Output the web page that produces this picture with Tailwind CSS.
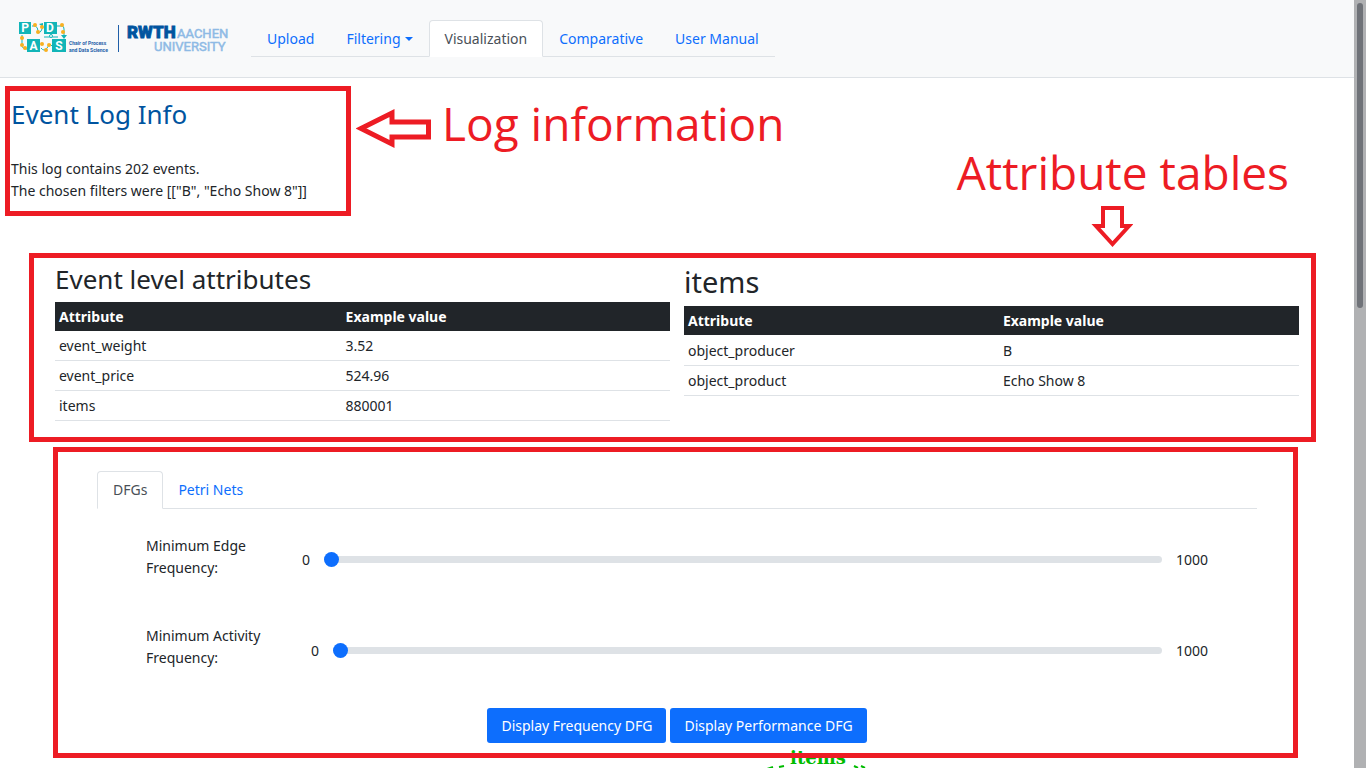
<!DOCTYPE html>
<html lang="en">
<head>
<meta charset="utf-8">
<meta name="viewport" content="width=device-width, initial-scale=1">
<title>Event Log Visualization</title>
<script src="https://cdn.jsdelivr.net/npm/@tailwindcss/browser@4"></script>
</head>
<body class="flex h-screen overflow-hidden bg-white font-['Noto_Sans',sans-serif] text-sm leading-[22px] text-[#212529]">
<div class="min-w-0 flex-1 overflow-hidden">
  <header class="flex items-start border-b border-[#dee2e6] bg-[#f8f9fa] pt-5 pb-5 pl-[19px]">
    <a href="#" aria-label="Chair of Process and Data Science, RWTH Aachen University" class="mr-[22px] block">
      <svg class="block" width="210" height="36" viewBox="0 0 210 36">
        <g fill="none" stroke="#12b5b8" stroke-width="1">
          <path d="M13 6h3q3 1 3 5t3 0l2-4M38 6h5q2 0 2 3v8M3 15v10q0 4 5 4M22 28q3 4 6 0t3-4 3 3M25 17h14"/>
        </g>
        <g fill="#12b5b8">
          <rect x="0" y="2" width="12" height="12"/><rect x="25" y="2" width="13" height="12"/>
          <rect x="8" y="19" width="13" height="13"/><rect x="33" y="19" width="14" height="13"/>
          <path d="M42 15h6l-3 4zM20 4l4-1v4z"/>
        </g>
        <circle cx="32" cy="16" r="1.5" fill="#fff" stroke="#12b5b8"/>
        <g fill="#f9b020">
          <circle cx="16" cy="5" r="2"/><circle cx="19" cy="12" r="2"/><circle cx="23" cy="7" r="2"/>
          <circle cx="43" cy="5" r="2"/><circle cx="44" cy="12" r="2"/><circle cx="3" cy="18" r="2"/>
          <circle cx="3" cy="25" r="2"/><circle cx="6" cy="28" r="2"/><circle cx="23" cy="24" r="2"/>
          <circle cx="27" cy="30" r="2"/><circle cx="30" cy="25" r="2"/>
        </g>
        <g fill="#fff" font-family="Roboto, sans-serif" font-weight="700" font-size="12" text-anchor="middle">
          <text x="6" y="12">P</text><text x="31" y="12">D</text><text x="14.5" y="30">A</text><text x="40" y="30">S</text>
        </g>
        <g fill="#1f5fa8" font-family="Roboto, sans-serif" font-weight="700" font-size="5">
          <text x="50" y="25">Chair of Process</text><text x="50" y="32">and Data Science</text>
        </g>
        <rect x="99" y="5" width="1" height="27" fill="#1f5fa8"/>
        <g font-family="Roboto, sans-serif">
          <text x="108" y="18" font-size="17" font-weight="900" fill="#00549f" stroke="#00549f" stroke-width=".8">RWTH</text>
          <text x="158" y="18" font-size="13" fill="#8ebae5" stroke="#8ebae5" stroke-width=".5">AACHEN</text>
          <text x="135" y="31" font-size="13" fill="#8ebae5" stroke="#8ebae5" stroke-width=".5">UNIVERSITY</text>
        </g>
      </svg>
    </a>
    <nav class="flex border-b border-[#dee2e6] text-[#0d6efd]">
      <a href="#" class="-mb-px border border-transparent px-[15px] pt-[7px] pb-[6px]">Upload</a>
      <a href="#" class="-mb-px flex items-center gap-1 border border-transparent px-[15px] pt-[7px] pb-[6px]">Filtering<span class="border-x-4 border-t-4 border-x-transparent border-t-[#0d6efd]"></span></a>
      <a href="#" aria-current="page" class="-mb-px rounded-t border border-[#dee2e6] border-b-white bg-white px-[15px] pt-[7px] pb-[6px] text-[#495057]">Visualization</a>
      <a href="#" class="-mb-px border border-transparent px-[15px] pt-[7px] pb-[6px]">Comparative</a>
      <a href="#" class="-mb-px border border-transparent px-[15px] pt-[7px] pb-[6px]">User Manual</a>
    </nav>
  </header>

  <main>
    <section class="flex items-start pt-2 pl-[5px]">
      <div class="w-[346px] border-5 border-[#ed1c24] px-px pt-[7px] pb-[9px]">
        <h1 class="text-[26px] leading-[32px] text-[#00549f]">Event Log Info</h1>
        <p class="mt-7">This log contains 202 events.</p>
        <p>The chosen filters were [["B", "Echo Show 8"]]</p>
      </div>
      <svg class="mt-[22px] ml-[5px] shrink-0" width="76" height="42" viewBox="0 0 76 42" fill="none" stroke="#ed1c24" stroke-width="5"><path d="M5 20.500L36 5v9h36.500v15H36v7z"/></svg>
      <p class="mt-[7px] ml-[10px] font-['Open_Sans',sans-serif] text-[46px] leading-[60px] whitespace-nowrap text-[#ed1c24]">Log information</p>
    </section>
    <div class="-mt-[72px] mr-[65px] flex flex-col items-end text-[#ed1c24]">
      <p class="font-['Open_Sans',sans-serif] text-[46px] leading-[56px]">Attribute tables</p>
      <svg class="mt-1 mr-[156px]" width="42" height="46" viewBox="0 0 42 46" fill="none" stroke="#ed1c24" stroke-width="4"><path d="M12 4h19v18h7L21.500 40 5 22h7z"/></svg>
    </div>

    <section class="mt-[3px] mr-[38px] ml-[29px] flex gap-3.5 border-5 border-[#ed1c24] pt-[6px] pr-3 pb-4 pl-[21px]">
      <div class="flex-1">
        <h2 class="mb-[7px] text-[26px] leading-[31px]">Event level attributes</h2>
        <table class="w-full table-fixed border-collapse text-left">
          <thead><tr class="h-[29px] bg-[#212529] text-white"><th class="w-[46.6%] px-1">Attribute</th><th class="px-1">Example value</th></tr></thead>
          <tbody>
            <tr class="h-[29px] border-b border-[#dee2e6]"><td class="px-1 pt-[2px]">event_weight</td><td class="px-1 pt-[2px]">3.52</td></tr>
            <tr class="h-[30px] border-b border-[#dee2e6]"><td class="px-1 pt-[2px]">event_price</td><td class="px-1 pt-[2px]">524.96</td></tr>
            <tr class="h-[30px] border-b border-[#dee2e6]"><td class="px-1 pt-[2px]">items</td><td class="px-1 pt-[2px]">880001</td></tr>
          </tbody>
        </table>
      </div>
      <div class="flex-1">
        <h2 class="mb-[7px] text-[29px] leading-[35px]">items</h2>
        <table class="w-full table-fixed border-collapse text-left">
          <thead><tr class="h-[29px] bg-[#212529] text-white"><th class="w-[51.2%] px-1">Attribute</th><th class="px-1">Example value</th></tr></thead>
          <tbody>
            <tr class="h-[30px] border-b border-[#dee2e6]"><td class="px-1 pt-[2px]">object_producer</td><td class="px-1 pt-[2px]">B</td></tr>
            <tr class="h-[30px] border-b border-[#dee2e6]"><td class="px-1 pt-[2px]">object_product</td><td class="px-1 pt-[2px]">Echo Show 8</td></tr>
          </tbody>
        </table>
      </div>
    </section>

    <section class="relative z-10 mt-[5px] mr-14 ml-[53px] border-5 border-[#ed1c24] px-9 pt-[19px] pb-[10px] pl-[39px]">
      <div role="tablist" class="flex border-b border-[#dee2e6] text-[#0d6efd]">
        <button role="tab" aria-selected="true" class="-mb-px rounded-t border border-[#dee2e6] border-b-white bg-white px-[15px] py-[7px] text-[#495057]">DFGs</button>
        <button role="tab" aria-selected="false" class="-mb-px border border-transparent px-3.5 py-[7px]">Petri Nets</button>
      </div>
      <div class="mt-[26px] mr-[49px] ml-[49px] flex items-start">
        <label for="edge" class="w-[156px] shrink-0 pr-8">Minimum Edge Frequency:</label>
        <div class="mt-3.5 flex flex-1 items-center">
          <span>0</span>
          <input id="edge" type="range" min="0" max="1000" value="0" class="mx-3.5 h-[22px] min-w-0 flex-1 appearance-none bg-transparent [&::-webkit-slider-runnable-track]:h-[7px] [&::-webkit-slider-runnable-track]:rounded-full [&::-webkit-slider-runnable-track]:bg-[#dee2e6] [&::-webkit-slider-thumb]:-mt-1 [&::-webkit-slider-thumb]:size-[15px] [&::-webkit-slider-thumb]:appearance-none [&::-webkit-slider-thumb]:rounded-full [&::-webkit-slider-thumb]:bg-[#0d6efd]">
          <span>1000</span>
        </div>
      </div>
      <div class="mt-[46px] mr-[49px] ml-[49px] flex items-start">
        <label for="activity" class="w-[165px] shrink-0 pr-8">Minimum Activity Frequency:</label>
        <div class="mt-[15px] flex flex-1 items-center">
          <span>0</span>
          <input id="activity" type="range" min="0" max="1000" value="0" class="mx-3.5 h-[22px] min-w-0 flex-1 appearance-none bg-transparent [&::-webkit-slider-runnable-track]:h-[7px] [&::-webkit-slider-runnable-track]:rounded-full [&::-webkit-slider-runnable-track]:bg-[#dee2e6] [&::-webkit-slider-thumb]:-mt-1 [&::-webkit-slider-thumb]:size-[15px] [&::-webkit-slider-thumb]:appearance-none [&::-webkit-slider-thumb]:rounded-full [&::-webkit-slider-thumb]:bg-[#0d6efd]">
          <span>1000</span>
        </div>
      </div>
      <div class="mt-[39px] flex justify-center gap-1 text-white">
        <button class="rounded-[3px] bg-[#0d6efd] px-3.5 pt-[7px] pb-[6px]">Display Frequency DFG</button>
        <button class="rounded-[3px] bg-[#0d6efd] px-3.5 pt-[7px] pb-[6px]">Display Performance DFG</button>
      </div>
    </section>
    <svg class="mx-auto -mt-[12px] block translate-x-[141px]" width="110" height="60" viewBox="0 0 110 60">
      <text x="55" y="18" text-anchor="middle" font-family="'DejaVu Serif', serif" font-weight="700" font-size="18" fill="#00bb00">items</text>
      <path d="M4 23l6-2M16 21l5-1M91 20l4 2M98 20l4 2" fill="none" stroke="#00bb00" stroke-width="2"/>
    </svg>
  </main>
</div>
<div aria-hidden="true" class="w-3 bg-[#b0b1b3] px-[3px] pt-[3px]"><div class="h-[305px] rounded-full bg-[#6f7278]"></div></div>
</body>
</html>
